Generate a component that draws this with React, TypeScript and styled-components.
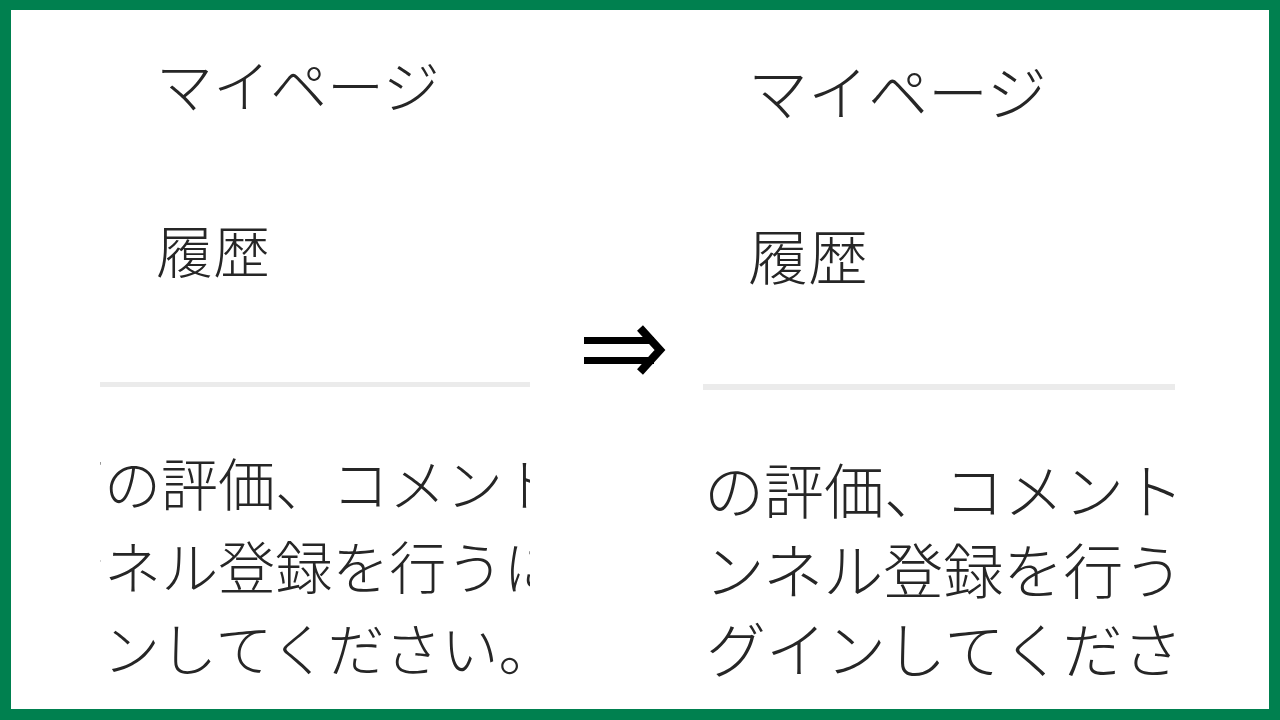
import styled, { createGlobalStyle } from 'styled-components';

interface PanelSpec {
  size: number;
  lineH: number;
  padTop: number;
  indent: number;
  headGap: number;
  ruleGap: number;
  ruleH: number;
  bodyGap: number;
  lines: { text: string; shift: number }[];
}

const before: PanelSpec = {
  size: 57,
  lineH: 82.5,
  padTop: 45,
  indent: 56,
  headGap: 108,
  ruleGap: 105,
  ruleH: 5,
  bodyGap: 53,
  lines: [
    { text: '動画の評価、コメント、', shift: -110 },
    { text: 'チャンネル登録を行うには', shift: -165 },
    { text: 'ログインしてください。', shift: -168 },
  ],
};

const after: PanelSpec = {
  size: 60,
  lineH: 79.5,
  padTop: 50,
  indent: 45,
  headGap: 104,
  ruleGap: 100,
  ruleH: 6,
  bodyGap: 58,
  lines: [
    { text: '動画の評価、コメント、', shift: -119 },
    { text: 'チャンネル登録を行うには', shift: -118 },
    { text: 'ログインしてください。', shift: -57 },
  ],
};

const GlobalStyle = createGlobalStyle`
  html, body {
    margin: 0;
    padding: 0;
    background: #ffffff;
  }
  body {
    font-family: "Noto Sans CJK JP", "Noto Sans", sans-serif;
  }
`;

const Frame = styled.div`
  width: 1280px;
  height: 720px;
  box-sizing: border-box;
  border-style: solid;
  border-color: #00804f;
  border-width: 10px 11px 11px 11px;
  background: #ffffff;
  display: flex;
  align-items: flex-start;
  overflow: hidden;
`;

const Panel = styled.div<{ $left: number; $width: number; $pad: number; $size: number }>`
  margin-left: ${(p) => p.$left}px;
  width: ${(p) => p.$width}px;
  height: 100%;
  padding-top: ${(p) => p.$pad}px;
  box-sizing: border-box;
  overflow: hidden;
  display: flex;
  flex-direction: column;
  font-size: ${(p) => p.$size}px;
  font-weight: 300;
  color: #262626;
`;

const Heading = styled.div<{ $indent: number; $gap?: number }>`
  margin-left: ${(p) => p.$indent}px;
  margin-top: ${(p) => p.$gap ?? 0}px;
  line-height: 1;
  white-space: nowrap;
`;

const Rule = styled.div<{ $gap: number; $h: number }>`
  margin-top: ${(p) => p.$gap}px;
  height: ${(p) => p.$h}px;
  background: #ebebeb;
  flex-shrink: 0;
`;

const Body = styled.div<{ $gap: number; $lineH: number }>`
  margin-top: ${(p) => p.$gap}px;
  line-height: ${(p) => p.$lineH}px;
`;

const Line = styled.div<{ $shift: number }>`
  margin-left: ${(p) => p.$shift}px;
  white-space: nowrap;
`;

const Arrow = styled.svg`
  flex-shrink: 0;
  margin-left: 54px;
  margin-top: 315px;
  width: 82px;
  height: 50px;
`;

const Side = ({ spec, left, width }: { spec: PanelSpec; left: number; width: number }) => (
  <Panel $left={left} $width={width} $pad={spec.padTop} $size={spec.size}>
    <Heading $indent={spec.indent}>マイページ</Heading>
    <Heading $indent={spec.indent} $gap={spec.headGap}>
      履歴
    </Heading>
    <Rule $gap={spec.ruleGap} $h={spec.ruleH} />
    <Body $gap={spec.bodyGap} $lineH={spec.lineH}>
      {spec.lines.map((l, i) => (
        <Line key={i} $shift={l.shift}>
          {l.text}
        </Line>
      ))}
    </Body>
  </Panel>
);

export default function App() {
  return (
    <>
      <GlobalStyle />
      <Frame>
        <Side spec={before} left={89} width={430} />
        <Arrow viewBox="0 0 82 50">
          <rect x="0" y="12" width="70" height="7" fill="#000" />
          <rect x="0" y="32" width="70" height="7" fill="#000" />
          <polyline
            points="56,3 76,25 56,47"
            fill="none"
            stroke="#000"
            strokeWidth="8"
            strokeLinejoin="miter"
          />
        </Arrow>
        <Side spec={after} left={37} width={472} />
      </Frame>
    </>
  );
}
